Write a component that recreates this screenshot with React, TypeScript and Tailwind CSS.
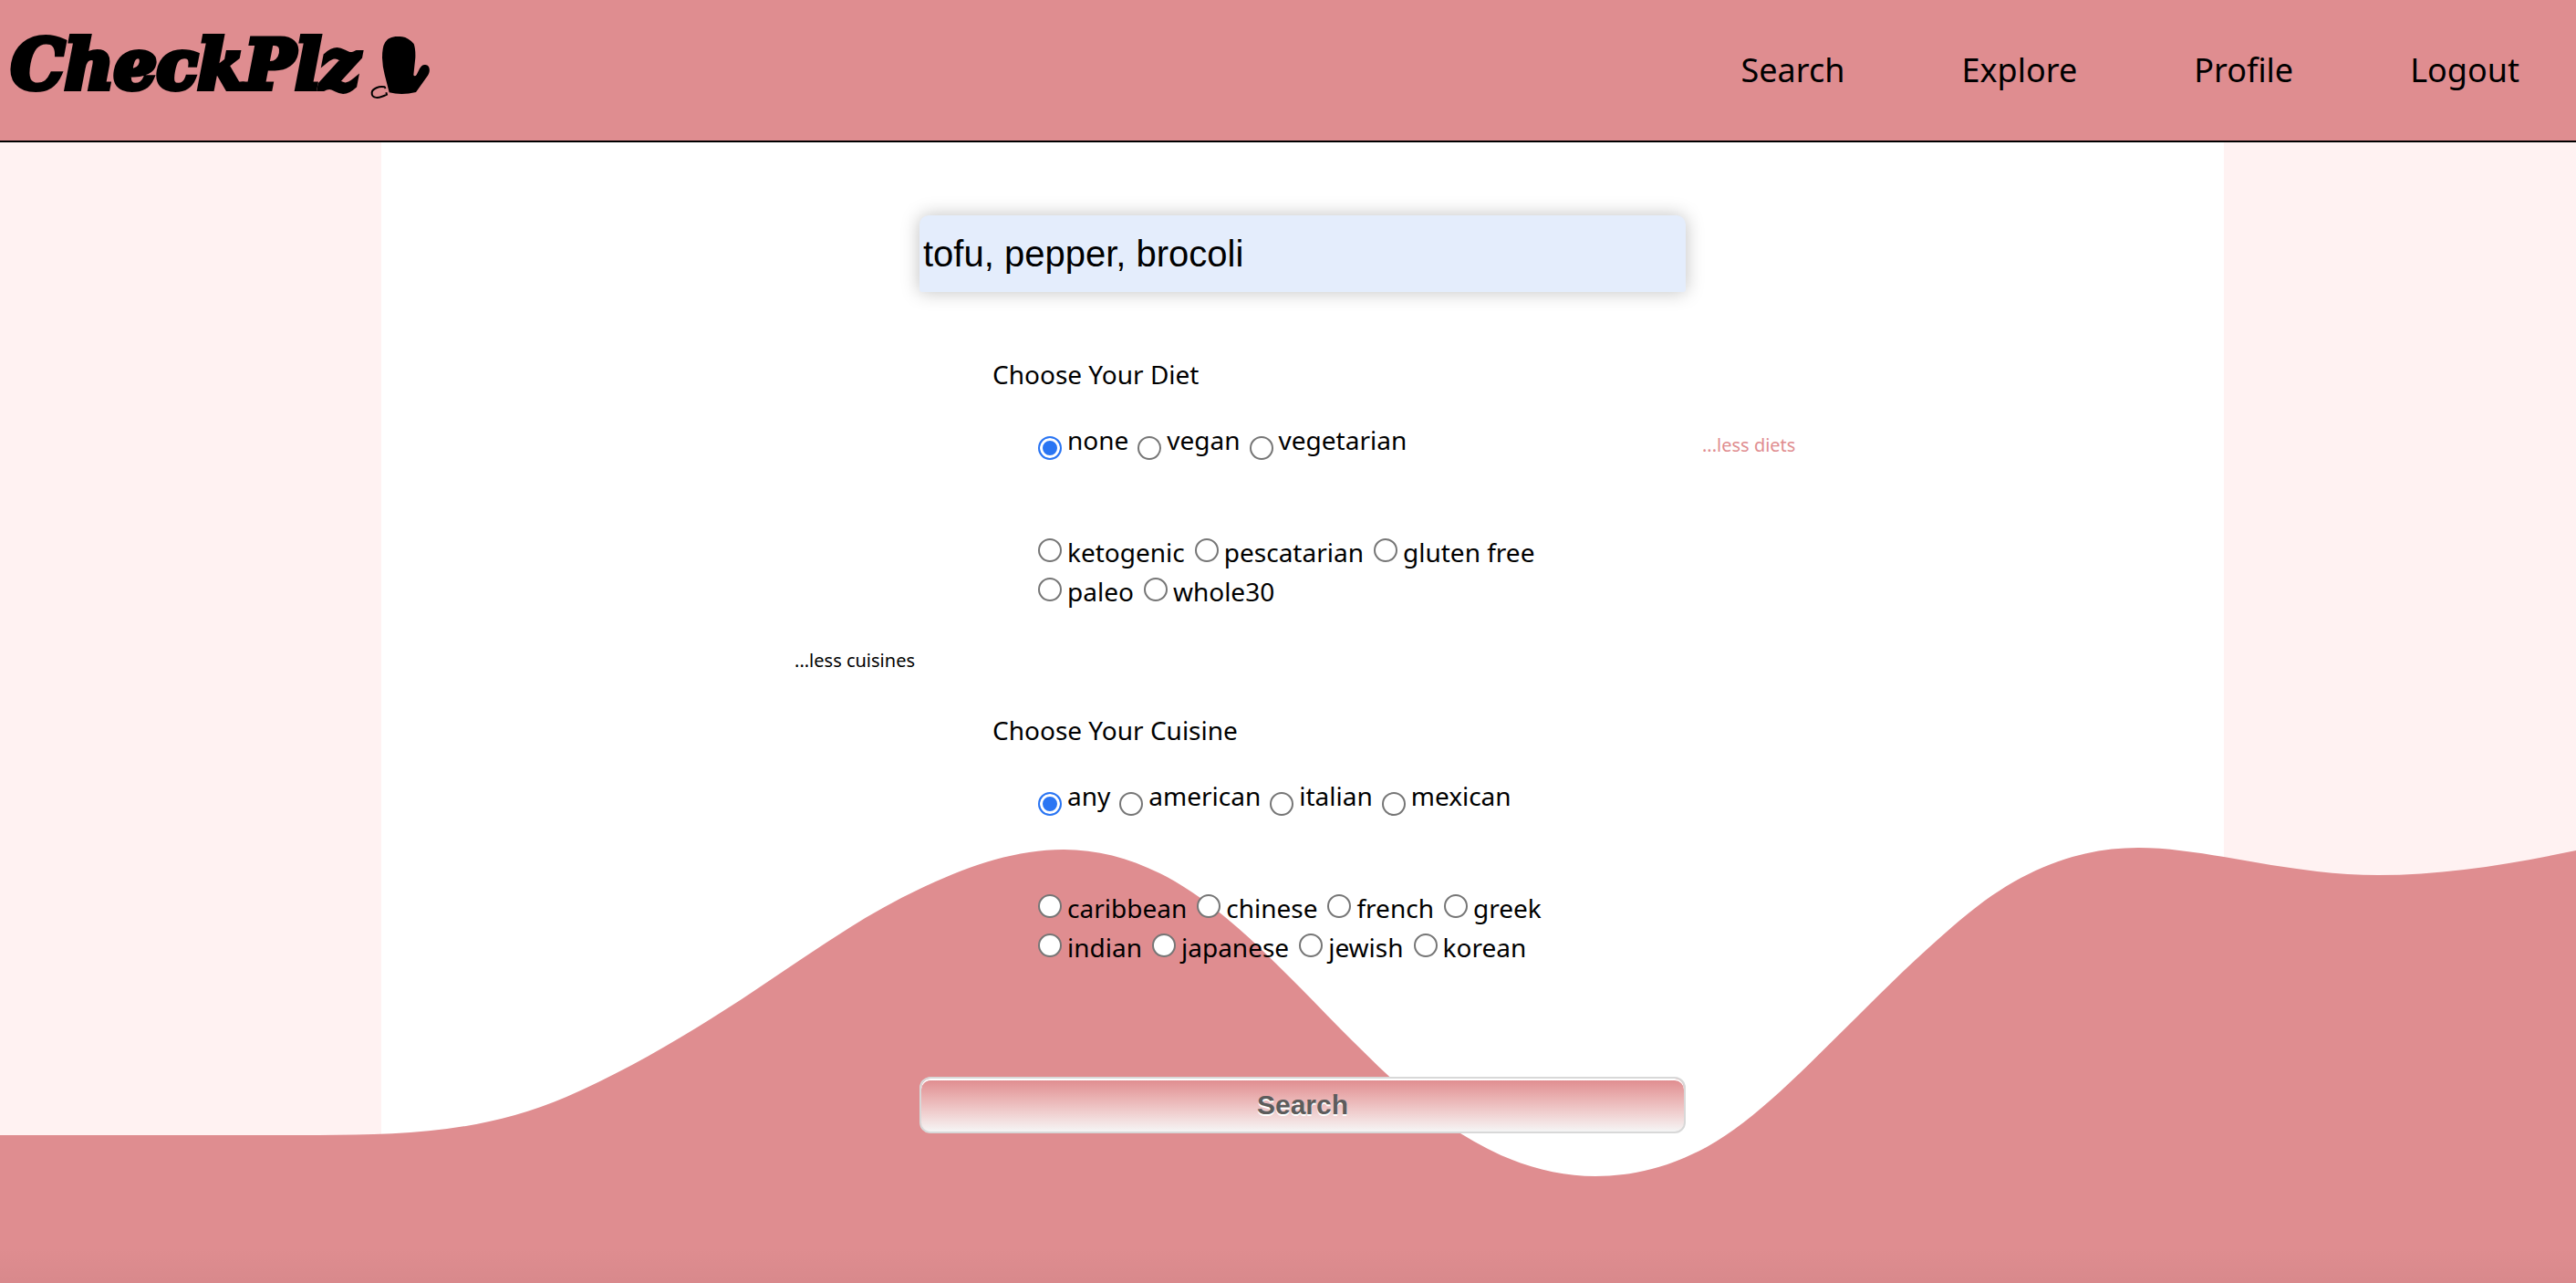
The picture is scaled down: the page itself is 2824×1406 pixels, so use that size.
import React, { useState } from 'react';

const NAV_LINKS = ['Search', 'Explore', 'Profile', 'Logout'];

const MAIN_DIETS = ['none', 'vegan', 'vegetarian'];
const MORE_DIETS = ['ketogenic', 'pescatarian', 'gluten free', 'paleo', 'whole30'];
const MAIN_CUISINES = ['any', 'american', 'italian', 'mexican'];
const MORE_CUISINES = [
  'caribbean',
  'chinese',
  'french',
  'greek',
  'indian',
  'japanese',
  'jewish',
  'korean',
];

function OvenMitt() {
  return (
    <svg viewBox="81 24 198 216" className="mt-1 h-[72px] w-[66px]" aria-hidden="true">
      <path d="M143 214Q185 225 231 213L270 158C280 142 276 124 262 123C253 122 247 128 243 136L233 156Q227 163 223 157L229 100Q230 70 224 54Q206 34 186 31C158 27 139 33 129 50Q120 64 120 100Q121 130 128 155Z" />
      <path
        d="M131 201L128 196C110 192 88 201 86 214C84 236 110 234 135 221L133 214"
        fill="none"
        stroke="black"
        strokeWidth="6"
      />
    </svg>
  );
}

function Wave() {
  return (
    <svg
      viewBox="0 0 2824 480"
      preserveAspectRatio="none"
      className="absolute bottom-0 left-0 h-[480px] w-full"
      aria-hidden="true"
    >
      <path
        fill="#df8d90"
        d="M0 318H350C440 318 531 315 621 276C690 246 759 205 828 159C888 119 948 76 1008.500 48C1061 23 1113 5 1166 5C1213 5 1259 20 1305.700 51C1341 74 1377 108 1412 143C1475 206 1538 276 1601 316C1650 347 1700 363 1748.800 363C1790 363 1830 353 1871 331C1925 301 1979 244 2033 191C2075 149 2117 108 2159 74C2221 24 2282 3 2344 3C2375 3 2407 8 2438 13C2494 23 2551 33 2607 33C2679 33 2752 21 2824 6V480H0Z"
      />
    </svg>
  );
}

type OptionsProps = {
  name: string;
  options: string[];
  value: string;
  onChange: (value: string) => void;
};

function MainOptions({ name, options, value, onChange }: OptionsProps) {
  return (
    <div className="flex flex-wrap gap-x-[10px] pl-[130px]">
      {options.map((option) => (
        <label key={option} className="flex items-start gap-[6px]">
          <input
            type="radio"
            name={name}
            checked={value === option}
            onChange={() => onChange(option)}
            className="mt-4 size-[26px] appearance-none rounded-full border-2 border-[#767676] bg-white checked:border-[#2a75f3] checked:bg-[#2a75f3] checked:shadow-[inset_0_0_0_3px_white]"
          />
          {option}
        </label>
      ))}
    </div>
  );
}

function MoreOptions({ name, options, value, onChange }: OptionsProps) {
  return (
    <div className="mt-[81px] flex flex-wrap gap-x-[11px] gap-y-[3px] pr-20 pl-[130px]">
      {options.map((option) => (
        <label key={option} className="flex items-start gap-[6px]">
          <input
            type="radio"
            name={name}
            checked={value === option}
            onChange={() => onChange(option)}
            className="mt-[5px] size-[26px] appearance-none rounded-full border-2 border-[#767676] bg-white checked:border-[#2a75f3] checked:bg-[#2a75f3] checked:shadow-[inset_0_0_0_3px_white]"
          />
          {option}
        </label>
      ))}
    </div>
  );
}

export default function App() {
  const [query, setQuery] = useState('tofu, pepper, brocoli');
  const [diet, setDiet] = useState('none');
  const [cuisine, setCuisine] = useState('any');

  return (
    <div className="flex min-h-screen flex-col bg-[#fff2f2] font-['Noto_Sans',sans-serif] text-[28px] leading-[40px] text-black">
      <header className="flex min-h-[156px] items-center justify-between border-b-2 border-black bg-[#df8d90] pr-[62px] pl-3">
        <a href="#" className="flex items-start gap-3 self-start pt-[34px]">
          <span className="font-['DejaVu_Serif',serif] text-[74px] leading-[74px] font-bold italic [-webkit-text-stroke:6px_black] [stroke-linejoin:round]">
            CheckPlz
          </span>
          <OvenMitt />
        </a>
        <nav className="flex gap-32 text-[36px] leading-[48px]">
          {NAV_LINKS.map((link) => (
            <a key={link} href="#">
              {link}
            </a>
          ))}
        </nav>
      </header>

      <main className="relative grid grow grid-cols-[418fr_2020fr_386fr]">
        <div className="col-start-2 row-start-1 bg-white" />
        <Wave />
        <div className="absolute bottom-0 left-0 h-10 w-full bg-linear-to-b from-transparent to-black/3" />
        <form
          className="relative col-start-2 row-start-1 flex flex-col pt-20 pb-20"
          onSubmit={(event) => event.preventDefault()}
        >
          <input
            type="text"
            aria-label="Ingredients"
            value={query}
            onChange={(event) => setQuery(event.target.value)}
            className="h-[84px] w-[840px] self-center rounded-t-[10px] rounded-b-[3px] bg-[#e4edfc] px-1 font-['Liberation_Sans',Arial,sans-serif] text-[40px] shadow-[0_0_20px_rgba(0,0,0,0.25)] outline-none"
          />

          <div
            role="radiogroup"
            aria-labelledby="diet-title"
            className="mt-[70px] grid grid-cols-[1fr_840px_1fr]"
          >
            <h2 id="diet-title" className="col-start-2 mb-8 pl-20">
              Choose Your Diet
            </h2>
            <div className="col-start-2">
              <MainOptions name="diet" options={MAIN_DIETS} value={diet} onChange={setDiet} />
            </div>
            <button
              type="button"
              className="mt-3 self-start justify-self-start pl-[18px] text-[20px] leading-[28px] text-[#df8d90]"
            >
              ...less diets
            </button>
            <div className="col-start-2">
              <MoreOptions name="diet" options={MORE_DIETS} value={diet} onChange={setDiet} />
            </div>
          </div>

          <div
            role="radiogroup"
            aria-labelledby="cuisine-title"
            className="mt-[42px] grid grid-cols-[1fr_840px_1fr]"
          >
            <button
              type="button"
              className="mb-[42px] justify-self-end pr-[5px] text-[20px] leading-[28px]"
            >
              ...less cuisines
            </button>
            <h2 id="cuisine-title" className="col-start-2 row-start-2 mb-8 pl-20">
              Choose Your Cuisine
            </h2>
            <div className="col-start-2 row-start-3">
              <MainOptions
                name="cuisine"
                options={MAIN_CUISINES}
                value={cuisine}
                onChange={setCuisine}
              />
              <MoreOptions
                name="cuisine"
                options={MORE_CUISINES}
                value={cuisine}
                onChange={setCuisine}
              />
            </div>
          </div>

          <button
            type="submit"
            className="mt-[122px] h-[62px] w-[840px] self-center rounded-[12px] border-2 border-[#d8d8d8] bg-linear-to-b from-[#df8a8d] to-[#f5f5f5] font-['Liberation_Sans',Arial,sans-serif] text-[30px] font-bold text-[#5c5c5c] shadow-[inset_0_2px_0_white] [text-shadow:0_2px_0_white]"
          >
            Search
          </button>
        </form>
      </main>
    </div>
  );
}
